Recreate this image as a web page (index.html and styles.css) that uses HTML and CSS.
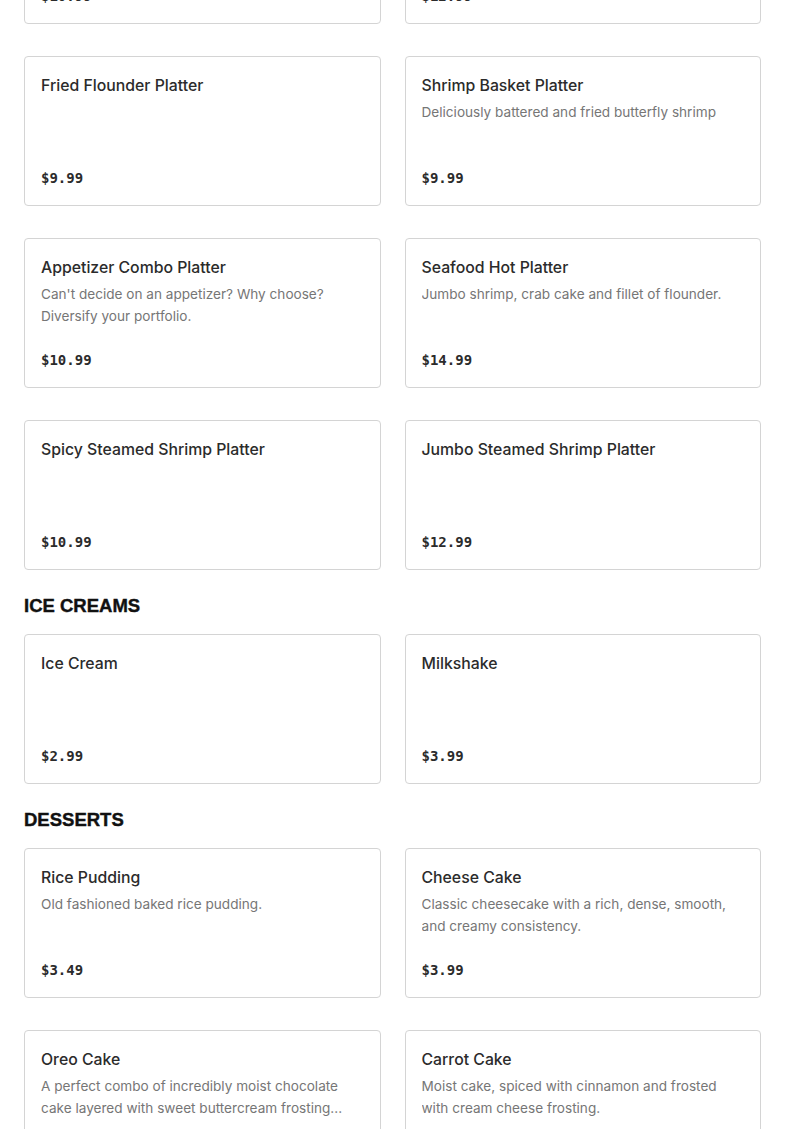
FILE: index.html
```html
<!DOCTYPE html>
<html lang="en">
<head>
<meta charset="utf-8">
<title>Menu</title>
<link rel="stylesheet" href="styles.css">
</head>
<body>
<main class="menu">
  <section class="section section-first">
    <div class="grid">
      <div class="card"><h3 class="title">Fish Platter</h3><p class="desc"></p><div class="price">$10.99</div></div>
      <div class="card"><h3 class="title">Crab Cake Platter</h3><p class="desc"></p><div class="price">$12.99</div></div>
      <div class="card"><h3 class="title">Fried Flounder Platter</h3><p class="desc"></p><div class="price">$9.99</div></div>
      <div class="card"><h3 class="title">Shrimp Basket Platter</h3><p class="desc">Deliciously battered and fried butterfly shrimp</p><div class="price">$9.99</div></div>
      <div class="card"><h3 class="title">Appetizer Combo Platter</h3><p class="desc">Can't decide on an appetizer? Why choose? Diversify your portfolio.</p><div class="price">$10.99</div></div>
      <div class="card"><h3 class="title">Seafood Hot Platter</h3><p class="desc">Jumbo shrimp, crab cake and fillet of flounder.</p><div class="price">$14.99</div></div>
      <div class="card"><h3 class="title">Spicy Steamed Shrimp Platter</h3><p class="desc"></p><div class="price">$10.99</div></div>
      <div class="card"><h3 class="title">Jumbo Steamed Shrimp Platter</h3><p class="desc"></p><div class="price">$12.99</div></div>
    </div>
  </section>
  <section class="section">
    <h2 class="heading">ICE CREAMS</h2>
    <div class="grid">
      <div class="card"><h3 class="title">Ice Cream</h3><p class="desc"></p><div class="price">$2.99</div></div>
      <div class="card"><h3 class="title">Milkshake</h3><p class="desc"></p><div class="price">$3.99</div></div>
    </div>
  </section>
  <section class="section">
    <h2 class="heading">DESSERTS</h2>
    <div class="grid">
      <div class="card"><h3 class="title">Rice Pudding</h3><p class="desc">Old fashioned baked rice pudding.</p><div class="price">$3.49</div></div>
      <div class="card"><h3 class="title">Cheese Cake</h3><p class="desc">Classic cheesecake with a rich, dense, smooth, and creamy consistency.</p><div class="price">$3.99</div></div>
      <div class="card"><h3 class="title">Oreo Cake</h3><p class="desc">A perfect combo of incredibly moist chocolate cake layered with sweet buttercream frosting...</p><div class="price">$4.99</div></div>
      <div class="card"><h3 class="title">Carrot Cake</h3><p class="desc">Moist cake, spiced with cinnamon and frosted with cream cheese frosting.</p><div class="price">$4.99</div></div>
    </div>
  </section>
</main>
</body>
</html>
```
FILE: styles.css
```css
* { box-sizing: border-box; }
html, body { margin: 0; padding: 0; background: #fff; }
body { font-family: Inter, "Noto Sans", sans-serif; color: #2d2d2d; }
.menu { padding: 0 24px; }
.section-first { margin-top: -126px; }
.heading {
  margin: 24px 0 16px;
  font-family: "Liberation Sans", Arial, sans-serif;
  font-weight: 700;
  font-size: 18.5px;
  line-height: 24px;
  color: #111;
  -webkit-text-stroke: 0.4px #111;
}
.grid {
  display: grid;
  grid-template-columns: 1fr 1fr;
  column-gap: 24px;
  row-gap: 32px;
}
.card {
  display: flex;
  flex-direction: column;
  height: 150px;
  padding: 17px 16px 15px;
  border: 1px solid #d4d4d4;
  border-radius: 4px;
  background: #fff;
}
.title {
  margin: 0;
  font-size: 15.8px;
  font-weight: 500;
  line-height: 24px;
  color: #2b2b2b;
}
.desc {
  margin: 3px 0 0;
  font-size: 13.6px;
  line-height: 22px;
  color: #767676;
  overflow: hidden;
  display: -webkit-box;
  -webkit-line-clamp: 2;
  -webkit-box-orient: vertical;
}
.price {
  margin-top: auto;
  font-family: "DejaVu Sans Mono", "Liberation Mono", monospace;
  font-weight: 700;
  font-size: 14px;
  line-height: 24px;
  color: #2b2b2b;
}
```
